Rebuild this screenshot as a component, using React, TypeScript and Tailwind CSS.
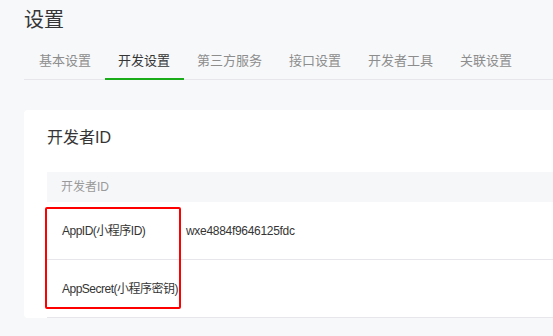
const tabs = ["基本设置", "开发设置", "第三方服务", "接口设置", "开发者工具", "关联设置"];

export default function App() {
  return (
    <div
      className="relative h-[336px] w-[553px] overflow-hidden bg-[#f7f8fa] text-[#353535]"
      style={{ fontFamily: '"Liberation Sans", "Noto Sans CJK SC", sans-serif' }}
    >
      {/* Page title */}
      <div className="pl-[24px] pt-[4px] text-[20px] leading-[32px]">设置</div>

      {/* Tabs */}
      <div className="ml-[24px] mt-[13px] flex w-[600px] border-b border-[#e7e7eb] pl-[1.5px]">
        {tabs.map((t, i) => (
          <div
            key={t}
            className={`px-[13.5px] pb-[5px] text-[13px] leading-[24px] ${
              i === 1 ? "border-b-2 border-[#1aad19] -mb-px text-[#353535]" : "text-[#8d8d8d]"
            }`}
          >
            {t}
          </div>
        ))}
      </div>

      {/* Card */}
      <div className="ml-[24px] mt-[30px] w-[600px] rounded-[4px] bg-white px-[23px] pt-[16px]">
        <h2 className="text-[16px] leading-[24px] text-[#353535]">开发者ID</h2>

        <div className="mt-[22px]">
          <div className="flex h-[30px] items-center bg-[#f6f7f9] pl-[14px] text-[12px] text-[#9a9a9a]">
            开发者ID
          </div>
          <div className="flex h-[58px] items-center border-b border-[#e7e7eb] text-[12px] tracking-[-0.5px]">
            <div className="w-[139px] whitespace-nowrap pl-[15px]">AppID(小程序ID)</div>
            <div className="tracking-[-0.3px]">wxe4884f9646125fdc</div>
          </div>
          <div className="flex h-[58px] items-center border-b border-[#e7e7eb] text-[12px] tracking-[-0.5px]">
            <div className="w-[139px] whitespace-nowrap pl-[15px]">AppSecret(小程序密钥)</div>
          </div>
        </div>
      </div>

      {/* Annotation box */}
      <div className="absolute left-[45px] top-[207px] h-[102px] w-[136px] rounded-[2px] border-2 border-[#ff0000]" />
    </div>
  );
}
